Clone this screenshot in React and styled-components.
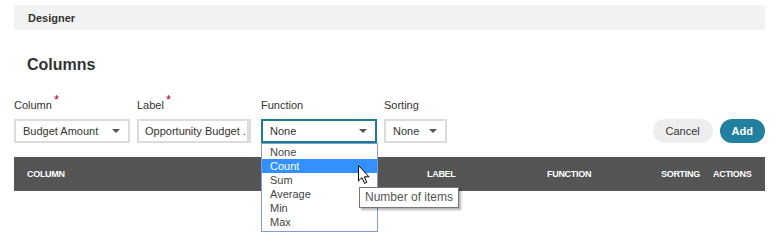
import styled, { createGlobalStyle } from "styled-components";

const Global = createGlobalStyle`
  body {
    margin: 0;
    background: #fff;
    font-family: "Liberation Sans", Arial, sans-serif;
    color: #333;
  }
`;

const functions = ["None", "Count", "Sum", "Average", "Min", "Max"];

export default function App() {
  return (
    <>
      <Global />
      <Page>
        <TitleBar>Designer</TitleBar>
        <Heading>Columns</Heading>
        <FormRow>
          <Field>
            <Label>
              Column<Star>*</Star>
            </Label>
            <Select width="116px">
              <Value>Budget Amount</Value>
              <Caret />
            </Select>
          </Field>
          <Field>
            <Label>
              Label<Star>*</Star>
            </Label>
            <TextBox>
              <Ellipsis>Opportunity Budget Amount</Ellipsis>
            </TextBox>
          </Field>
          <Field $shift="3px">
            <Label>Function</Label>
            <Select width="116px" $focused>
              <Value>None</Value>
              <Caret />
            </Select>
            <Menu>
              {functions.map((f) => (
                <MenuItem key={f} $active={f === "Count"}>
                  {f}
                </MenuItem>
              ))}
            </Menu>
            <Cursor viewBox="0 0 12 19" width="12" height="19">
              <path
                d="M0.5 0.5 L0.5 16 L4 12.6 L6.6 18.4 L8.8 17.4 L6.3 11.8 L11 11.8 Z"
                fill="#fff"
                stroke="#000"
                strokeWidth="1"
                strokeLinejoin="round"
              />
            </Cursor>
            <Tooltip>Number of items</Tooltip>
          </Field>
          <Field>
            <Label>Sorting</Label>
            <Select width="63px">
              <Value>None</Value>
              <Caret />
            </Select>
          </Field>
          <Actions>
            <Button>Cancel</Button>
            <Button $primary>Add</Button>
          </Actions>
        </FormRow>
        <TableHead>
          <Th>Column</Th>
          <Th>Label</Th>
          <Th>Function</Th>
          <Th>Sorting</Th>
          <Th>Actions</Th>
        </TableHead>
      </Page>
    </>
  );
}

const Page = styled.div`
  box-sizing: border-box;
  min-height: 242px;
  padding: 5px 18px 0 14px;
`;

const TitleBar = styled.div`
  height: 25px;
  background: #f2f2f2;
  border-radius: 3px;
  padding-left: 14px;
  display: flex;
  align-items: center;
  font-size: 11px;
  font-weight: bold;
  color: #333;
`;

const Heading = styled.h2`
  margin: 25px 0 0 13px;
  font-size: 16px;
  line-height: 20px;
  font-weight: bold;
  color: #333;
`;

const FormRow = styled.div`
  margin-top: 23px;
  display: flex;
  align-items: flex-end;
  gap: 7px;
`;

const Field = styled.div`
  position: relative;
  display: flex;
  flex-direction: column;
  gap: 7px;
  margin-left: ${(p) => p.$shift || 0};
`;

const Label = styled.div`
  font-size: 11px;
  line-height: 14px;
  color: #333;
`;

const Star = styled.span`
  color: #c0001a;
  font-size: 13px;
  position: relative;
  top: -5px;
  margin-left: 2px;
`;

const Select = styled.div`
  box-sizing: border-box;
  width: ${(p) => p.width};
  height: 24px;
  border: 2px solid ${(p) => (p.$focused ? "#1e7b8e" : "#dcdcdc")};
  padding: 0 8px 0 7px;
  display: flex;
  align-items: center;
  justify-content: space-between;
  background: #fff;
`;

const Value = styled.span`
  font-size: 11px;
  color: #333;
  white-space: nowrap;
`;

const Caret = styled.span`
  width: 0;
  height: 0;
  border-left: 4px solid transparent;
  border-right: 4px solid transparent;
  border-top: 4px solid #555;
`;

const TextBox = styled.div`
  box-sizing: border-box;
  width: 114px;
  height: 24px;
  border: 2px solid #dcdcdc;
  border-right-width: 4px;
  padding: 0 0 0 6px;
  display: flex;
  align-items: center;
  overflow: hidden;
  box-shadow: inset -2px 0 0 #fff;
`;

const Ellipsis = styled.span`
  flex: none;
  width: 110px;
  font-size: 11px;
  color: #333;
  white-space: nowrap;
  overflow: hidden;
  text-overflow: ellipsis;
`;

const Menu = styled.ul`
  position: absolute;
  top: 45px;
  left: 0;
  z-index: 2;
  box-sizing: border-box;
  width: 117px;
  margin: 0;
  padding: 1px 0 2px;
  list-style: none;
  background: #fff;
  border: 1px solid #7f9dd4;
`;

const MenuItem = styled.li`
  font-size: 11px;
  line-height: 14px;
  padding-left: 8px;
  color: ${(p) => (p.$active ? "#fff" : "#444")};
  background: ${(p) => (p.$active ? "#3391ff" : "transparent")};
`;

const Cursor = styled.svg`
  position: absolute;
  top: 67px;
  left: 97px;
  z-index: 4;
`;

const Tooltip = styled.div`
  position: absolute;
  top: 89px;
  left: 98px;
  z-index: 3;
  white-space: nowrap;
  background: #fff;
  border: 1px solid #777;
  padding: 2px 5px 3px;
  font-size: 12px;
  line-height: 14px;
  color: #555;
  box-shadow: 2px 2px 2px rgba(0, 0, 0, 0.3);
`;

const Actions = styled.div`
  margin-left: auto;
  display: flex;
  gap: 7px;
`;

const Button = styled.button`
  height: 24px;
  border: none;
  border-radius: 12px;
  padding: 0 12px;
  min-width: ${(p) => (p.$primary ? "45px" : "60px")};
  font-family: inherit;
  font-size: 11px;
  font-weight: ${(p) => (p.$primary ? "bold" : "normal")};
  background: ${(p) => (p.$primary ? "#217fa0" : "#eeeeee")};
  color: ${(p) => (p.$primary ? "#fff" : "#333")};
`;

const TableHead = styled.div`
  margin-top: 14px;
  height: 34px;
  background: #555;
  display: grid;
  grid-template-columns: 400px 120px 114px 52px auto;
  align-items: center;
  padding-left: 13px;
`;

const Th = styled.div`
  font-size: 9px;
  font-weight: bold;
  text-transform: uppercase;
  color: #fff;
  letter-spacing: -0.3px;
`;
